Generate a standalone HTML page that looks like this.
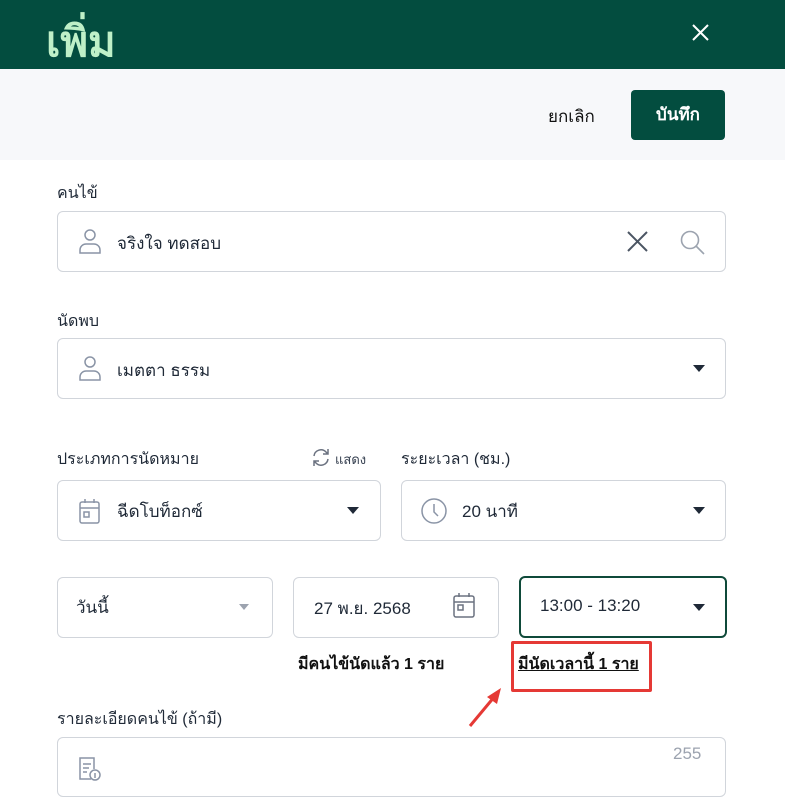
<!DOCTYPE html>
<html><head><meta charset="utf-8"><style>
*{box-sizing:border-box;margin:0;padding:0}
body{width:785px;height:783px;overflow:hidden;background:#fff;font-family:"Liberation Sans","DejaVu Sans",sans-serif;color:#1f2937;position:relative}
.a{position:absolute}
.box{position:absolute;border:1px solid #d1d5db;border-radius:6px;background:#fff}
.lbl{position:absolute;font-size:16px;color:#1f2937}
.txt{position:absolute;font-size:17px;color:#1f2937}
.tri{position:absolute;width:0;height:0;border-left:6px solid transparent;border-right:6px solid transparent;border-top:7px solid #1f2937}
</style></head><body>
<div class="a" style="left:0;top:0;width:785px;height:69px;background:#034d3f"></div>
<div class="a" style="left:46px;top:9px;font-size:42px;font-weight:bold;color:#bff0c8">เพิ่ม</div>
<svg class="a" style="left:691px;top:23px" width="19" height="19"><path d="M2 2L17 17M17 2L2 17" stroke="#fff" stroke-width="2"/></svg>
<div class="a" style="left:0;top:69px;width:785px;height:91px;background:#f7f8fa"></div>
<div class="a" style="left:548px;top:103px;font-size:17px;color:#111">ยกเลิก</div>
<div class="a" style="left:631px;top:90px;width:94px;height:50px;background:#034d3f;border-radius:4px;color:#fff;font-size:17px;font-weight:bold;text-align:center;line-height:50px">บันทึก</div>

<div class="lbl" style="left:57px;top:181px">คนไข้</div>
<div class="box" style="left:57px;top:211px;width:669px;height:61px"></div>
<svg class="a" style="left:78px;top:228px" width="24" height="26" fill="none" stroke="#8a94a6" stroke-width="1.5"><circle cx="12" cy="7" r="5"/><path d="M2 25v-3a6 6 0 0 1 6-6h8a6 6 0 0 1 6 6v3z"/></svg>
<div class="txt" style="left:117px;top:230px">จริงใจ ทดสอบ</div>
<svg class="a" style="left:626px;top:230px" width="23" height="23"><path d="M2 2L21 21M21 2L2 21" stroke="#4b5563" stroke-width="2"/></svg>
<svg class="a" style="left:679px;top:229px" width="28" height="28" fill="none" stroke="#9ca3af" stroke-width="1.6"><circle cx="11" cy="11" r="8.5"/><path d="M17 17l8 8"/></svg>

<div class="lbl" style="left:57px;top:309px">นัดพบ</div>
<div class="box" style="left:57px;top:338px;width:669px;height:61px"></div>
<svg class="a" style="left:78px;top:355px" width="24" height="26" fill="none" stroke="#8a94a6" stroke-width="1.5"><circle cx="12" cy="7" r="5"/><path d="M2 25v-3a6 6 0 0 1 6-6h8a6 6 0 0 1 6 6v3z"/></svg>
<div class="txt" style="left:117px;top:357px">เมตตา ธรรม</div>
<div class="tri" style="left:693px;top:365px"></div>

<div class="lbl" style="left:57px;top:447px">ประเภทการนัดหมาย</div>
<svg class="a" style="left:311px;top:447px" width="20" height="21" fill="none" stroke="#6b7280" stroke-width="1.5"><path d="M3 9a7 7 0 0 1 12-4l2 2M17 12a7 7 0 0 1-12 4l-2-2M17 2v5h-5M3 19v-5h5"/></svg>
<div class="a" style="left:335px;top:449px;font-size:13px;color:#374151">แสดง</div>
<div class="lbl" style="left:401px;top:447px">ระยะเวลา (ชม.)</div>
<div class="box" style="left:57px;top:480px;width:324px;height:61px"></div>
<svg class="a" style="left:79px;top:498px" width="22" height="27" fill="none" stroke="#8a94a6" stroke-width="1.5"><rect x="1" y="4" width="19" height="21" rx="2"/><path d="M1 10h19M6 1v4M15 1v4"/><rect x="5" y="14" width="5" height="5"/></svg>
<div class="txt" style="left:117px;top:498px">ฉีดโบท็อกซ์</div>
<div class="tri" style="left:347px;top:507px"></div>
<div class="box" style="left:401px;top:480px;width:325px;height:61px"></div>
<svg class="a" style="left:420px;top:497px" width="28" height="28" fill="none" stroke="#8a94a6" stroke-width="1.5"><circle cx="14" cy="14" r="12"/><path d="M14 7v8l4 4"/></svg>
<div class="txt" style="left:462px;top:498px">20 นาที</div>
<div class="tri" style="left:693px;top:507px"></div>

<div class="box" style="left:57px;top:577px;width:216px;height:61px"></div>
<div class="txt" style="left:76px;top:594px">วันนี้</div>
<div class="a" style="left:239px;top:604px;width:0;height:0;border-left:5px solid transparent;border-right:5px solid transparent;border-top:6px solid #9ca3af"></div>
<div class="box" style="left:293px;top:577px;width:206px;height:61px"></div>
<div class="txt" style="left:314px;top:595px">27 พ.ย. 2568</div>
<svg class="a" style="left:453px;top:592px" width="24" height="28" fill="none" stroke="#6b7280" stroke-width="1.5"><rect x="1" y="4" width="20" height="21" rx="2"/><path d="M1 10h20M6 1v4M16 1v4"/><rect x="5" y="13" width="5" height="5"/></svg>
<div class="a" style="left:519px;top:576px;width:208px;height:62px;border:2px solid #0f4a3a;border-radius:6px"></div>
<div class="txt" style="left:540px;top:596px">13:00 - 13:20</div>
<div class="tri" style="left:693px;top:604px"></div>

<div class="a" style="left:298px;top:652px;font-size:16px;font-weight:bold;color:#111">มีคนไข้นัดแล้ว 1 ราย</div>
<div class="a" style="left:511px;top:641px;width:141px;height:51px;border:3px solid #e53935;border-radius:2px"></div>
<div class="a" style="left:518px;top:652px;font-size:16px;font-weight:bold;color:#111;text-decoration:underline">มีนัดเวลานี้ 1 ราย</div>
<svg class="a" style="left:465px;top:684px" width="40" height="46"><path d="M5 42L30 12" stroke="#e53935" stroke-width="3"/><path d="M36 4L22 13L32 20z" fill="#e53935"/></svg>

<div class="lbl" style="left:57px;top:707px">รายละเอียดคนไข้ (ถ้ามี)</div>
<div class="box" style="left:57px;top:737px;width:669px;height:60px"></div>
<div class="a" style="left:673px;top:744px;font-size:17px;color:#9ca3af">255</div>
<svg class="a" style="left:77px;top:756px" width="26" height="26" fill="none" stroke="#8a94a6" stroke-width="1.5"><path d="M14 23H3V2h14v11M6 8h8M6 12h6M6 16h4"/><circle cx="18" cy="19" r="5"/><path d="M18 17v5"/></svg>
</body></html>
